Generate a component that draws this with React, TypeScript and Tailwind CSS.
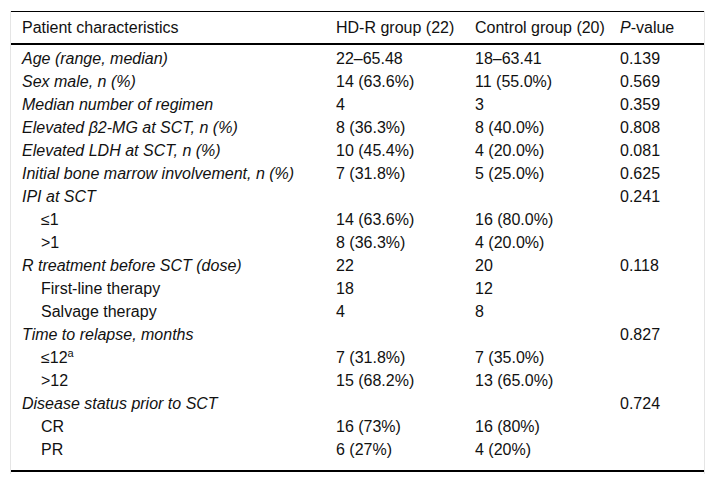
const rows: { label: React.ReactNode; a: string; b: string; p: string; sub?: boolean }[] = [
  { label: "Age (range, median)", a: "22–65.48", b: "18–63.41", p: "0.139" },
  { label: "Sex male, n (%)", a: "14 (63.6%)", b: "11 (55.0%)", p: "0.569" },
  { label: "Median number of regimen", a: "4", b: "3", p: "0.359" },
  { label: "Elevated β2-MG at SCT, n (%)", a: "8 (36.3%)", b: "8 (40.0%)", p: "0.808" },
  { label: "Elevated LDH at SCT, n (%)", a: "10 (45.4%)", b: "4 (20.0%)", p: "0.081" },
  { label: "Initial bone marrow involvement, n (%)", a: "7 (31.8%)", b: "5 (25.0%)", p: "0.625" },
  { label: "IPI at SCT", a: "", b: "", p: "0.241" },
  { label: "≤1", a: "14 (63.6%)", b: "16 (80.0%)", p: "", sub: true },
  { label: ">1", a: "8 (36.3%)", b: "4 (20.0%)", p: "", sub: true },
  { label: "R treatment before SCT (dose)", a: "22", b: "20", p: "0.118" },
  { label: "First-line therapy", a: "18", b: "12", p: "", sub: true },
  { label: "Salvage therapy", a: "4", b: "8", p: "", sub: true },
  { label: "Time to relapse, months", a: "", b: "", p: "0.827" },
  { label: <>≤12<sup className="text-[11px] -top-[6px]">a</sup></>, a: "7 (31.8%)", b: "7 (35.0%)", p: "", sub: true },
  { label: ">12", a: "15 (68.2%)", b: "13 (65.0%)", p: "", sub: true },
  { label: "Disease status prior to SCT", a: "", b: "", p: "0.724" },
  { label: "CR", a: "16 (73%)", b: "16 (80%)", p: "", sub: true },
  { label: "PR", a: "6 (27%)", b: "4 (20%)", p: "", sub: true },
];

// column starts at x = 22 / 336 / 475 / 620
const grid = "grid grid-cols-[325px_139px_145px_1fr]";

export default function App() {
  return (
    <div className="w-[715px] h-[484px] bg-white pt-[11px] px-[10px] text-[16px] text-[#111] font-['Liberation_Sans',Arial,sans-serif]">
      <div className="border-x border-[#e5e5e5] pb-[2px]">
        <div className={`${grid} border-t border-black border-b-2 h-[34px] items-center`}>
          <div className="pl-[11px]">Patient characteristics</div>
          <div>HD-R group (22)</div>
          <div>Control group (20)</div>
          <div><i>P</i>-value</div>
        </div>
        <div className="border-b-2 border-black pt-[2.5px] pb-[8.5px]">
          {rows.map((r, i) => (
            <div key={i} className={`${grid} h-[23px] items-center leading-none`}>
              <div className={r.sub ? "pl-[30px]" : "pl-[11px] italic"}>{r.label}</div>
              <div>{r.a}</div>
              <div>{r.b}</div>
              <div>{r.p}</div>
            </div>
          ))}
        </div>
      </div>
    </div>
  );
}
